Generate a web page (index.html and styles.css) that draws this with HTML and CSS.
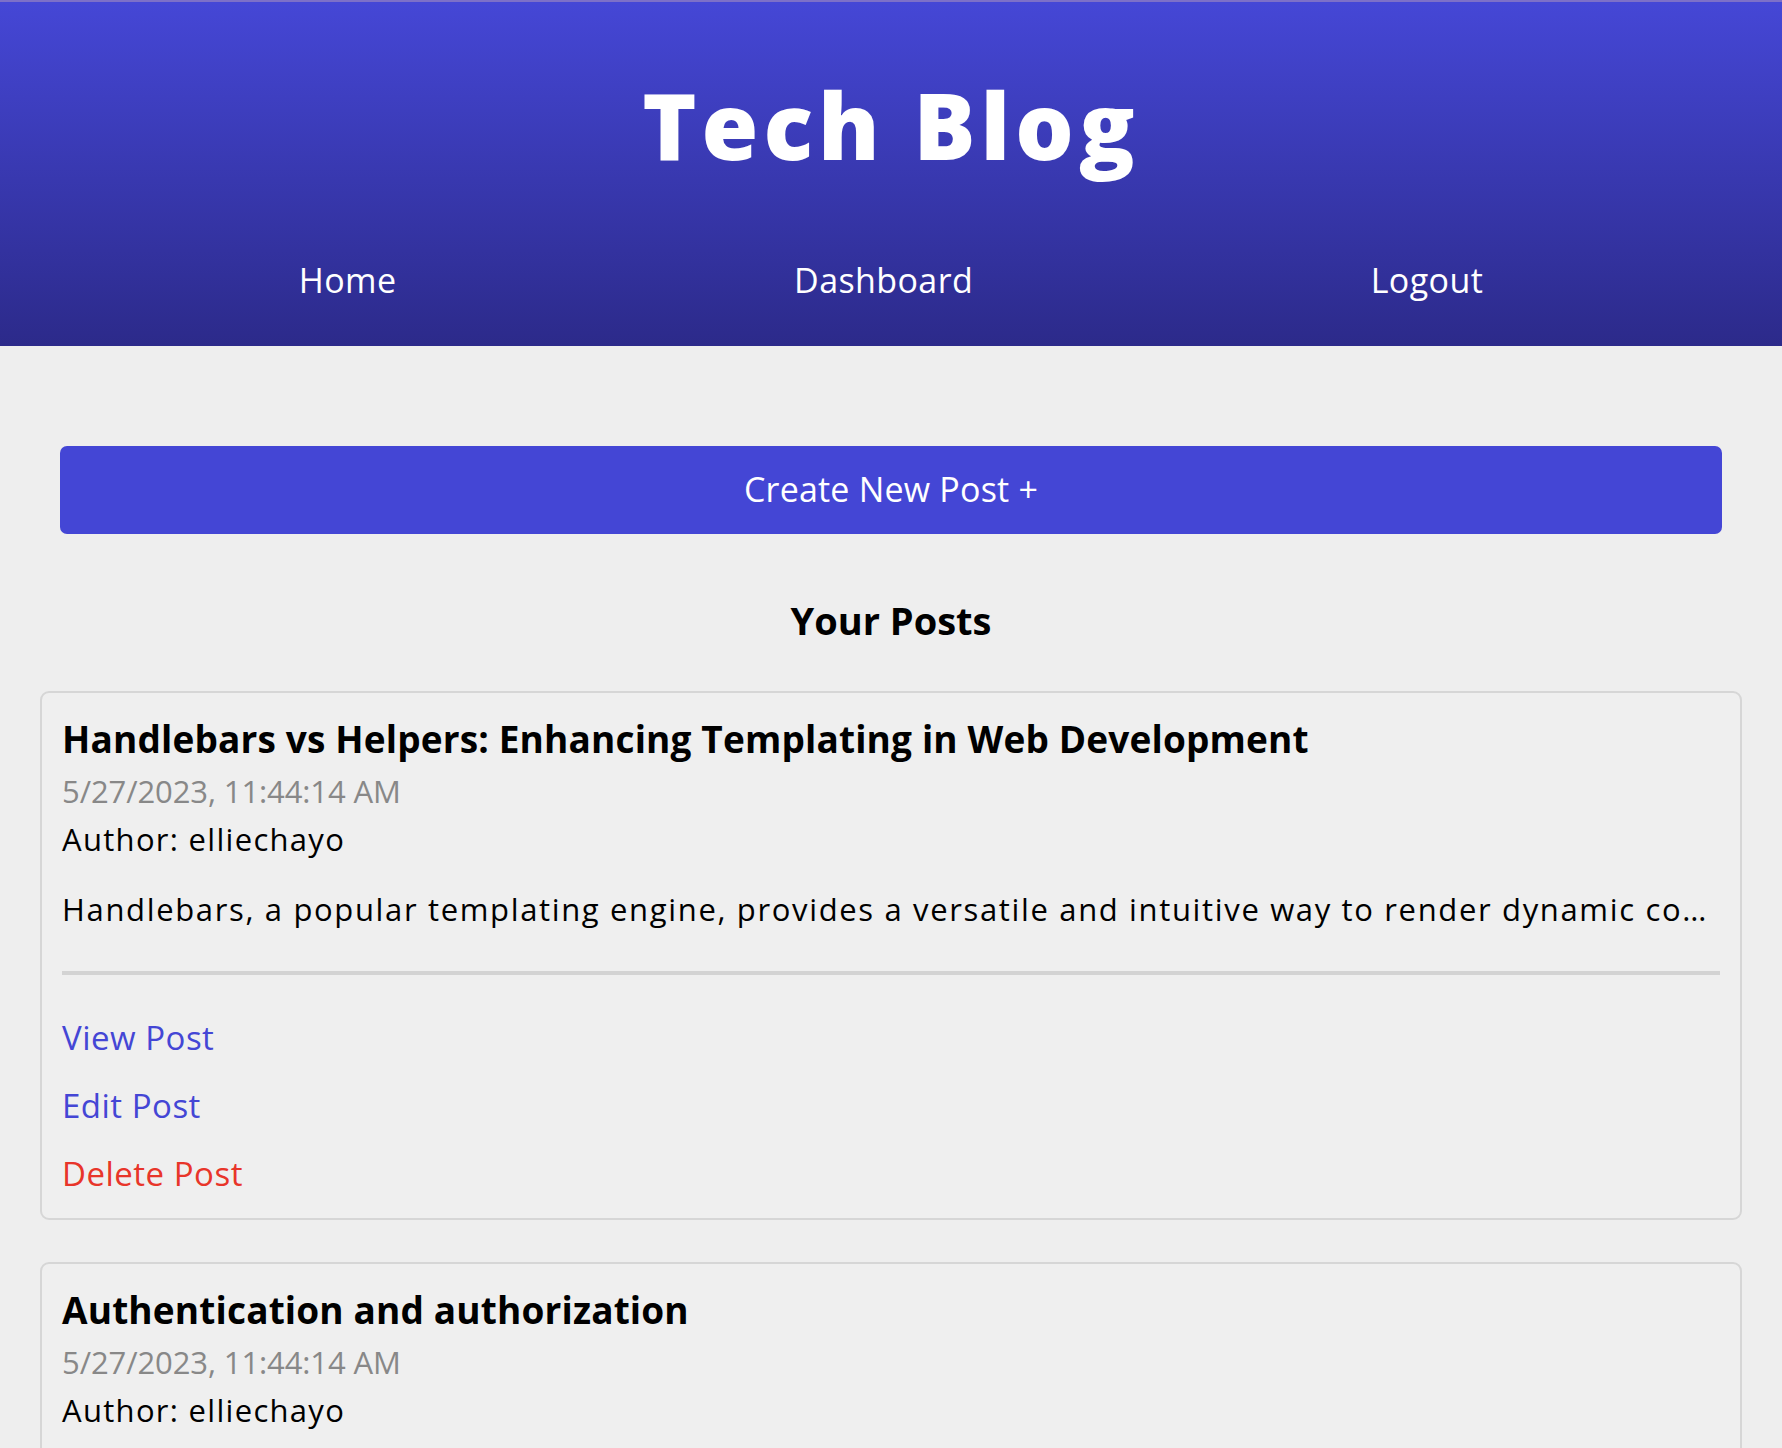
FILE: index.html
```html
<!DOCTYPE html>
<html lang="en">
<head>
<meta charset="utf-8">
<title>Tech Blog</title>
<link rel="stylesheet" href="styles.css">
</head>
<body>
<header class="site-header">
  <h1 class="site-title">Tech Blog</h1>
  <nav class="site-nav">
    <a class="nav-link" href="#">Home</a>
    <a class="nav-link" href="#">Dashboard</a>
    <a class="nav-link" href="#">Logout</a>
  </nav>
</header>
<main class="dashboard">
  <a class="create-btn" href="#">Create New Post +</a>
  <h2 class="section-title">Your Posts</h2>
  <article class="post-card">
    <h3 class="post-title">Handlebars vs Helpers: Enhancing Templating in Web Development</h3>
    <p class="post-date">5/27/2023, 11:44:14 AM</p>
    <p class="post-author">Author: elliechayo</p>
    <p class="post-excerpt">Handlebars, a popular templating engine, provides a versatile and intuitive way to render dynamic content in web applications through helpers and partials.</p>
    <hr class="post-divider">
    <div class="post-actions">
      <a class="action-link" href="#">View Post</a>
      <a class="action-link" href="#">Edit Post</a>
      <a class="action-link delete" href="#">Delete Post</a>
    </div>
  </article>
  <article class="post-card">
    <h3 class="post-title">Authentication and authorization</h3>
    <p class="post-date">5/27/2023, 11:44:14 AM</p>
    <p class="post-author">Author: elliechayo</p>
    <p class="post-excerpt">Authentication and authorization are two essential security concepts for protecting web applications and their users.</p>
    <hr class="post-divider">
    <div class="post-actions">
      <a class="action-link" href="#">View Post</a>
      <a class="action-link" href="#">Edit Post</a>
      <a class="action-link delete" href="#">Delete Post</a>
    </div>
  </article>
</main>
</body>
</html>
```
FILE: styles.css
```css
* {
  box-sizing: border-box;
}

body {
  margin: 0;
  background: #eeeeee;
  font-family: "Open Sans", "Noto Sans", sans-serif;
  color: #000;
}

a {
  text-decoration: none;
}

.site-header {
  border-top: 2px solid #7d70c8;
  background: linear-gradient(to bottom, #4547d6 0%, #2c2a8a 100%);
  padding-bottom: 46px;
}

.site-title {
  margin: 68px 0 0;
  text-align: center;
  color: #fff;
  font-size: 92px;
  line-height: 110px;
  font-weight: 800;
  letter-spacing: 5px;
}

.site-nav {
  margin-top: 80px;
  display: flex;
  justify-content: space-around;
  padding: 0 100px;
}

.nav-link {
  color: #fff;
  font-size: 34px;
  line-height: 40px;
  letter-spacing: 0.4px;
}

.dashboard {
  padding: 100px 40px 40px;
}

.create-btn {
  display: block;
  margin: 0 20px;
  height: 88px;
  line-height: 86px;
  background: #4446d5;
  color: #fff;
  border-radius: 7px;
  text-align: center;
  font-size: 34px;
  letter-spacing: 0.2px;
}

.section-title {
  margin: 63px 0 48px;
  text-align: center;
  font-size: 38px;
  line-height: 46px;
  font-weight: 700;
}

.post-card {
  border: 2px solid #d6d6d6;
  border-radius: 9px;
  padding: 24px 20px 24px;
  margin-bottom: 42px;
  background: #efefef;
}

.post-title {
  margin: 0;
  font-size: 37px;
  line-height: 44px;
  font-weight: 700;
  letter-spacing: 0.15px;
}

.post-date {
  margin: 10px 0 0;
  color: #888888;
  font-size: 31px;
  line-height: 40px;
  letter-spacing: -0.1px;
}

.post-author {
  margin: 9px 0 0;
  font-size: 31px;
  line-height: 38px;
  letter-spacing: 1.3px;
}

.post-excerpt {
  margin: 32px 0 0;
  font-size: 31px;
  line-height: 38px;
  letter-spacing: 1.65px;
  white-space: nowrap;
  overflow: hidden;
  text-overflow: ellipsis;
}

.post-divider {
  margin: 43px 0 0;
  height: 0;
  border: 0;
  border-top: 4px solid #d3d3d3;
}

.post-actions {
  display: flex;
  flex-direction: column;
  align-items: flex-start;
  gap: 28px;
  margin-top: 43px;
}

.action-link {
  color: #4446d5;
  font-size: 33px;
  line-height: 40px;
  letter-spacing: 0.5px;
}

.action-link.delete {
  color: #e8352a;
}
```
